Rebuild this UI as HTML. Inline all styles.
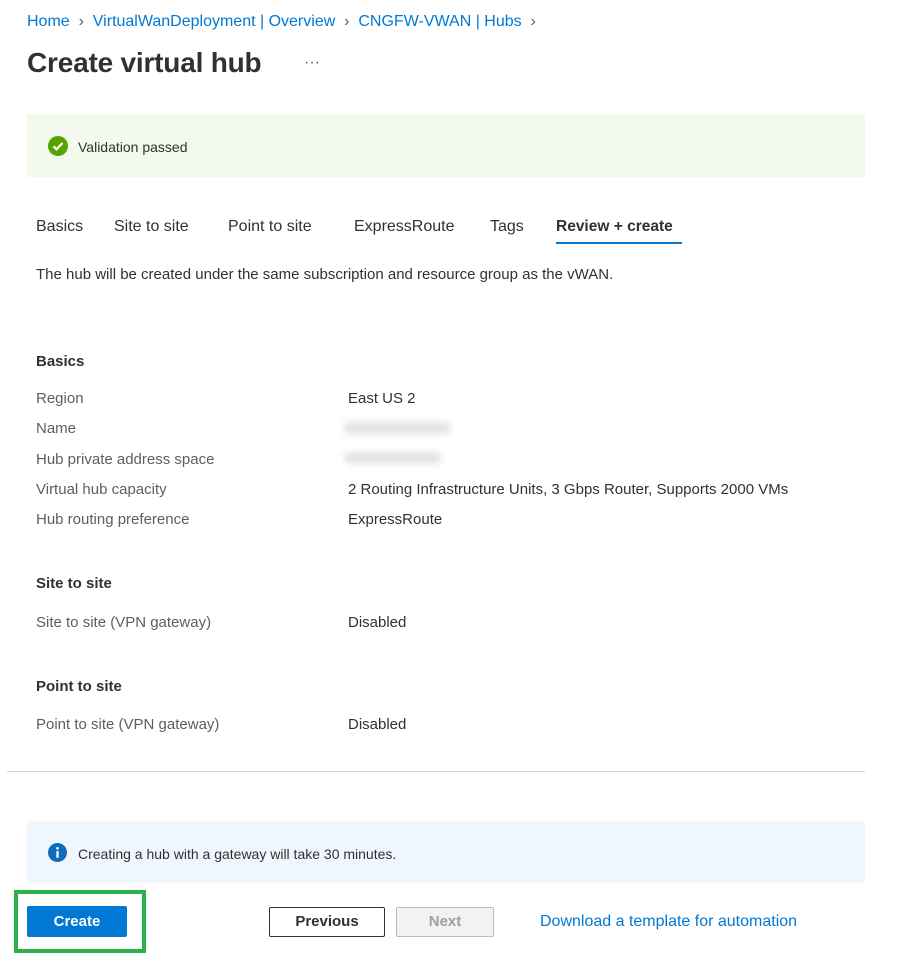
<!DOCTYPE html>
<html><head><meta charset="utf-8"><style>
body{margin:0;width:914px;height:966px;background:#fff;position:relative;font-family:"Liberation Sans",sans-serif;color:#323130;overflow:hidden}
.a{position:absolute;white-space:nowrap;line-height:1}
.bl{color:#0078d4}
.lab{color:#605e5c;font-size:15px}
.val{color:#323130;font-size:15px}
.h{font-size:15px;font-weight:bold;color:#323130}
.tab{font-size:16px;color:#323130;top:219px}
</style></head><body>
<div class="a" style="left:27px;top:14px;font-size:16px;color:#605e5c"><span class="bl">Home</span>&nbsp; › &nbsp;<span class="bl">VirtualWanDeployment | Overview</span>&nbsp; › &nbsp;<span class="bl">CNGFW-VWAN | Hubs</span>&nbsp; ›</div>
<div class="a" style="left:27px;top:49px;font-size:28px;font-weight:bold;color:#323130;letter-spacing:-0.2px">Create virtual hub</div>
<div class="a" style="left:304px;top:55px;font-size:16px;color:#605e5c">···</div>
<div class="a" style="left:27px;top:114px;width:838px;height:63px;background:#f3f9ed"></div>
<svg class="a" style="left:48px;top:136px" width="20" height="20" viewBox="0 0 20 20"><circle cx="10" cy="10" r="10" fill="#57a300"/><path d="M5.5 10.3l3 3 6-6.3" stroke="#fff" stroke-width="2.2" fill="none"/></svg>
<div class="a" style="left:78px;top:140px;font-size:14px;color:#323130">Validation passed</div>
<div class="a tab" style="left:36px">Basics</div>
<div class="a tab" style="left:114px">Site to site</div>
<div class="a tab" style="left:228px">Point to site</div>
<div class="a tab" style="left:354px">ExpressRoute</div>
<div class="a tab" style="left:490px">Tags</div>
<div class="a tab" style="left:556px;font-weight:bold;font-size:15.5px">Review + create</div>
<div class="a" style="left:556px;top:242px;width:126px;height:2px;background:#0078d4"></div>
<div class="a" style="left:36px;top:267px;font-size:15px">The hub will be created under the same subscription and resource group as the vWAN.</div>
<div class="a h" style="left:36px;top:354px">Basics</div>
<div class="a lab" style="left:36px;top:391px">Region</div><div class="a val" style="left:348px;top:391px">East US 2</div>
<div class="a lab" style="left:36px;top:421px">Name</div>
<div class="a" style="left:345px;top:423px;width:105px;height:10px;background:#ddd;filter:blur(4px)"></div>
<div class="a lab" style="left:36px;top:452px">Hub private address space</div>
<div class="a" style="left:345px;top:453px;width:95px;height:10px;background:#ddd;filter:blur(4px)"></div>
<div class="a lab" style="left:36px;top:482px">Virtual hub capacity</div><div class="a val" style="left:348px;top:482px">2 Routing Infrastructure Units, 3 Gbps Router, Supports 2000 VMs</div>
<div class="a lab" style="left:36px;top:512px">Hub routing preference</div><div class="a val" style="left:348px;top:512px">ExpressRoute</div>
<div class="a h" style="left:36px;top:576px">Site to site</div>
<div class="a lab" style="left:36px;top:615px">Site to site (VPN gateway)</div><div class="a val" style="left:348px;top:615px">Disabled</div>
<div class="a h" style="left:36px;top:679px">Point to site</div>
<div class="a lab" style="left:36px;top:717px">Point to site (VPN gateway)</div><div class="a val" style="left:348px;top:717px">Disabled</div>
<div class="a" style="left:7px;top:771px;width:858px;height:1px;background:#d6d6d6"></div>
<div class="a" style="left:27px;top:821px;width:838px;height:62px;background:#eff6fe"></div>
<svg class="a" style="left:48px;top:843px" width="19" height="19" viewBox="0 0 20 20"><circle cx="10" cy="10" r="10" fill="#0f6cbd"/><rect x="8.8" y="8.5" width="2.4" height="7" fill="#fff"/><circle cx="10" cy="5.6" r="1.4" fill="#fff"/></svg>
<div class="a" style="left:78px;top:847px;font-size:14px">Creating a hub with a gateway will take 30 minutes.</div>
<div class="a" style="left:14px;top:890px;width:124px;height:55px;border:4px solid #2bb24c"></div>
<div class="a" style="left:27px;top:906px;width:100px;height:31px;background:#0078d4;border-radius:2px;color:#fff;font-size:15px;font-weight:bold;text-align:center;line-height:31px">Create</div>
<div class="a" style="left:269px;top:907px;width:114px;height:28px;border:1px solid #323130;border-radius:2px;font-size:15px;font-weight:bold;text-align:center;line-height:28px">Previous</div>
<div class="a" style="left:396px;top:907px;width:96px;height:28px;border:1px solid #bbb;background:#f3f2f1;border-radius:2px;font-size:15px;font-weight:bold;color:#a19f9d;text-align:center;line-height:28px">Next</div>
<div class="a bl" style="left:540px;top:914px;font-size:16px">Download a template for automation</div>
</body></html>
